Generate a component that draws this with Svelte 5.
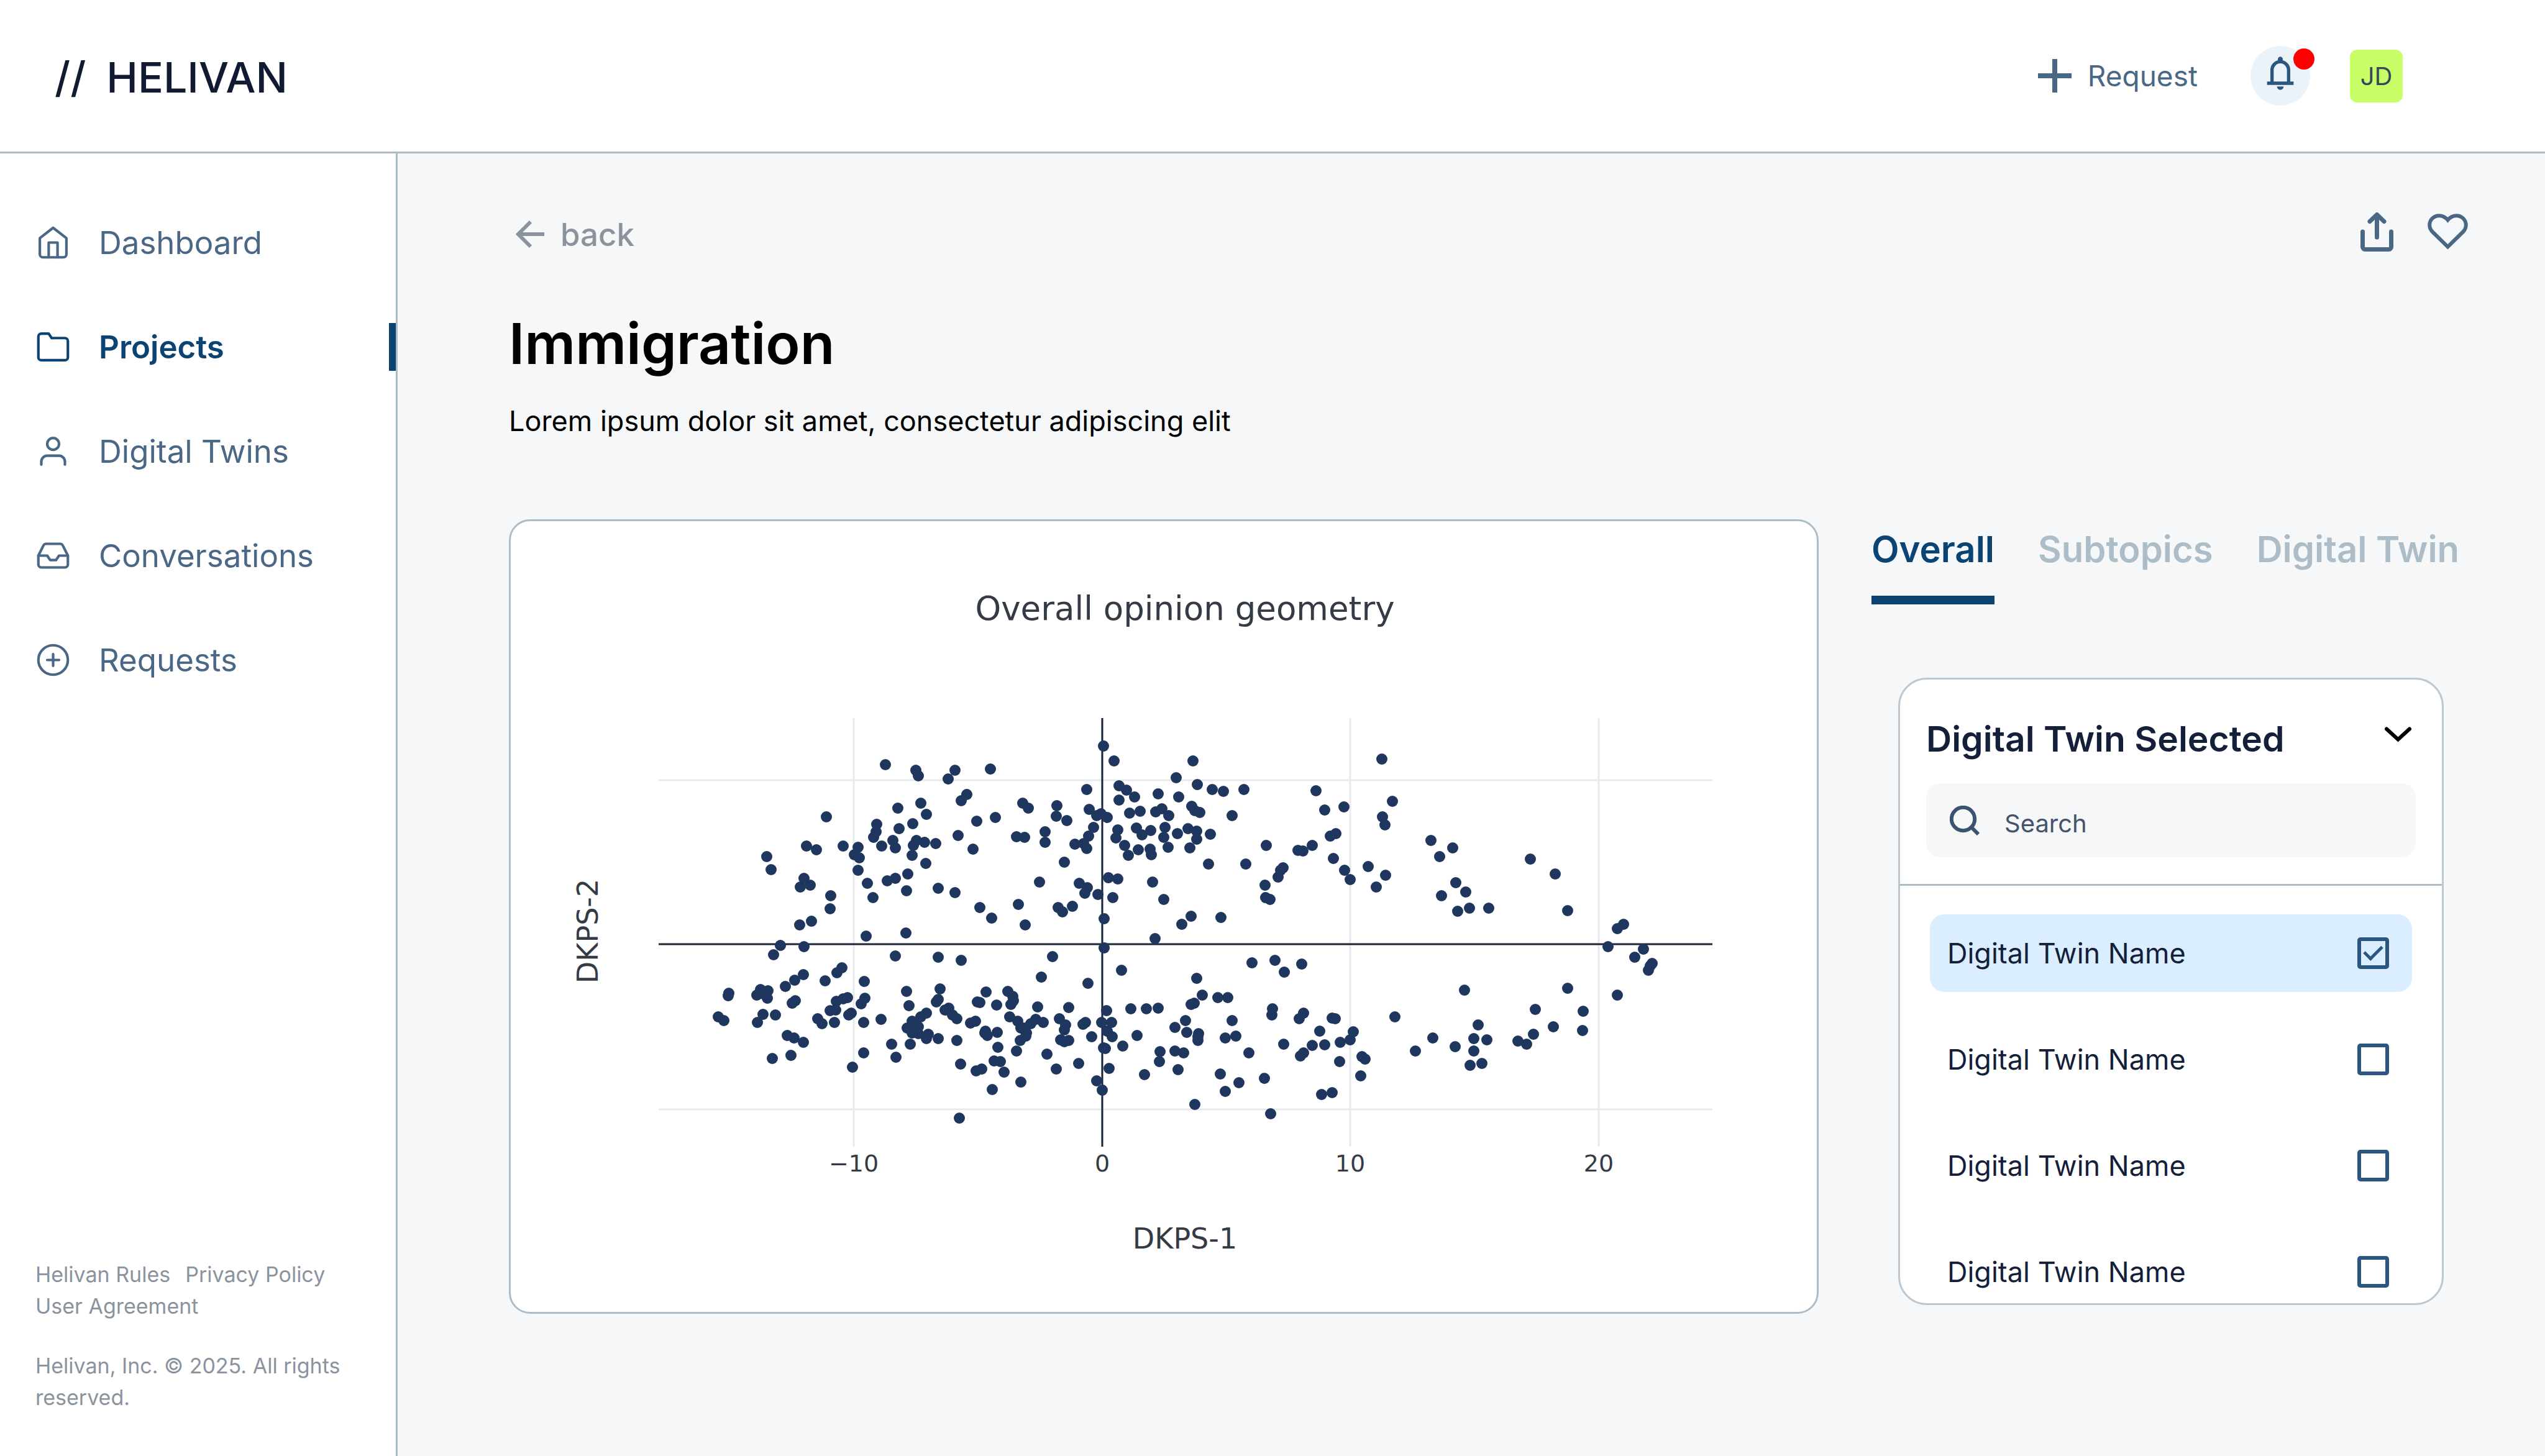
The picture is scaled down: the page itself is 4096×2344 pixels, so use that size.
<script>
    // sidebar links
    let navItems = [
        { id: 'dashboard', title: 'Dashboard' },
        { id: 'projects', title: 'Projects' },
        { id: 'twins', title: 'Digital Twins' },
        { id: 'conversations', title: 'Conversations' },
        { id: 'requests', title: 'Requests' }
    ];
    let activeNav = 'projects';

    let tabs = ['Overall', 'Subtopics', 'Digital Twin'];
    let activeTab = 'Overall';

    let twins = [
        { id: 1, name: 'Digital Twin Name', selected: true },
        { id: 2, name: 'Digital Twin Name', selected: false },
        { id: 3, name: 'Digital Twin Name', selected: false },
        { id: 4, name: 'Digital Twin Name', selected: false }
    ];
    let search = '';

    // gridlines of the scatter plot
    let xTicks = [
        { x: 552, label: '−10' },
        { x: 952, label: '0' },
        { x: 1351, label: '10' },
        { x: 1751, label: '20' }
    ];

    // samples come in four vertical bands, each on its own 1568 grid
    const GRID = 1568;
    const bands = [
        {
            start: 230, width: 441,
            points: [
                [1327,215],[989,408],[1396,377],[1275,437],[1272,464],[1258,484],[876,517],[932,531],
                [1086,517],[1306,517],[1368,497],[1382,523],[1405,452],[1171,522],[1148,548],[1178,560],
                [1170,607],[647,556],[673,603],[859,636],[838,668],[896,661],[1015,700],[1009,748],
                [1222,654],[1254,706],[1336,645],[1383,636],[1215,849],[837,807],[904,795],[727,885],
                [685,918],[861,888],[1382,923],[858,991],[807,1012],[754,1036],[981,1015],[1050,986],
                [1078,966],[1206,1018],[430,1061],[426,1069],[610,1047],[589,1067],[653,1051],[651,1080],
                [630,1062],[627,1138],[594,1169],[698,1142],[368,1147],[400,1161],[810,1088],[794,1098],
                [1045,1090],[1085,1081],[1111,1077],[1008,1124],[1041,1122],[1208,1080],[1187,1099],
                [1131,1135],[1118,1140],[940,1155],[965,1174],[1036,1169],[1201,1168],[1300,1157],
                [766,1217],[803,1227],[856,1241],[785,1290],[678,1301],[1362,1249],[1385,1297],
                [1203,1280],[1139,1333]
            ]
        },
        {
            start: 629, width: 441,
            points: [
                [80,236],[97,257],[306,237],[265,268],[508,232],[109,359],[141,399],[63,435],
                [372,327],[342,348],[430,425],[538,410],[84,496],[130,503],[195,507],[68,514],
                [62,552],[137,580],[325,478],[409,529],[34,620],[28,681],[208,672],[306,689],
                [447,744],[514,782],[25,837],[692,357],[724,376],[656,482],[704,485],[668,733],
                [706,807],[791,650],[822,463],[822,503],[889,368],[884,407],[944,422],[932,576],
                [1059,308],[1073,381],[1115,405],[1140,397],[1178,411],[1100,447],[1071,480],[991,510],
                [1043,508],[1061,526],[1018,655],[1063,671],[1050,690],[1122,696],[897,744],[920,760],
                [976,740],[1157,148],[1217,203],[1245,294],[1286,311],[1332,335],[1244,347],[1306,396],
                [1367,389],[1239,457],[1227,487],[1343,450],[1377,475],[1278,514],[1297,552],[1353,530],
                [1184,633],[1238,639],[1208,708],[1159,786],[1160,893],[211,927],[343,940],[864,925],
                [799,1000],[1067,1024],[1257,976],[28,1053],[41,1107],[222,1044],[209,1084],[199,1093],
                [270,1115],[249,1122],[290,1142],[315,1155],[485,1055],[434,1092],[447,1095],[543,1105],
                [608,1053],[636,1071],[639,1088],[624,1101],[780,1111],[957,1113],[142,1135],[110,1148],
                [60,1165],[95,1185],[32,1190],[64,1192],[61,1207],[95,1210],[141,1229],[152,1213],
                [209,1228],[51,1249],[318,1236],[396,1170],[422,1164],[481,1200],[475,1208],[491,1217],
                [549,1205],[550,1260],[619,1148],[665,1163],[683,1190],[700,1190],[738,1172],[768,1156],
                [810,1169],[713,1207],[712,1218],[680,1236],[657,1273],[530,1312],[566,1314],[586,1353],
                [426,1348],[458,1340],[339,1323],[518,1416],[682,1388],[332,1523],[904,1155],[940,1178],
                [933,1195],[911,1232],[932,1240],[957,1236],[832,1285],[887,1341],[1013,1321],[1052,1169],
                [1037,1175],[1087,1221],[1173,1124],[1145,1169],[1202,1169],[1176,1200],[1204,1221],
                [1155,1263],[1166,1264],[1265,1256],[1186,1339],[1116,1384],[1150,1419],[1313,1118],
                [1401,1117],[1346,1217],[1391,1361]
            ]
        },
        {
            start: 1027, width: 441,
            points: [
                [12,459],[7,527],[13,548],[254,203],[157,265],[277,289],[55,324],[171,335],
                [363,308],[427,315],[545,307],[478,405],[247,370],[263,385],[291,393],[40,390],
                [76,378],[115,404],[91,447],[85,485],[111,521],[163,471],[225,452],[272,461],
                [272,491],[236,523],[351,473],[342,583],[553,583],[673,515],[22,650],[87,715],
                [188,805],[243,775],[412,780],[35,858],[665,661],[667,708],[694,715],[740,632],
                [767,598],[752,607],[854,533],[883,536],[934,515],[957,312],[1005,384],[1115,371],
                [1038,480],[1069,471],[1056,563],[1120,605],[1151,641],[1254,592],[1354,624],[1302,667],
                [1333,194],[1394,352],[1337,409],[1351,438],[590,948],[722,939],[776,982],[874,953],
                [275,1005],[305,1068],[243,1102],[259,1098],[395,1076],[453,1077],[55,1115],[478,1162],
                [209,1162],[148,1186],[217,1206],[283,1209],[281,1222],[282,1235],[438,1225],[498,1220],
                [571,1282],[63,1276],[60,1313],[148,1275],[199,1281],[168,1344],[410,1360],[438,1423],
                [517,1391],[662,1376],[262,1472],[697,1507],[706,1118],[704,1140],[859,1154],[887,1133],
                [1048,1153],[1068,1155],[976,1201],[935,1253],[1005,1251],[1094,1242],[1153,1233],
                [1170,1204],[1092,1314],[772,1248],[869,1293],[886,1280],[1220,1294],[1236,1304],
                [1213,1367],[989,1435],[1048,1429],[1409,1149]
            ]
        },
        {
            start: 1425, width: 540,
            points: [
                [162,495],[263,523],[204,555],[278,651],[213,701],[325,687],[288,758],[342,746],
                [432,747],[626,564],[742,621],[800,755],[1064,806],[1035,821],[989,889],[1155,898],
                [1114,927],[1195,951],[1180,975],[1187,960],[1035,1067],[800,1043],[649,1120],
                [874,1128],[318,1049],[872,1199],[735,1184],[643,1213],[570,1238],[610,1249],
                [382,1178],[363,1229],[424,1232],[276,1259],[171,1227],[363,1275],[346,1326],
                [401,1321],[91,1275]
            ]
        }
    ];

    const dots = bands.flatMap(b =>
        b.points.map(([x, y]) => ({
            x: Math.round(b.start + (x * b.width) / GRID),
            y: Math.round(298 + (y * 683) / GRID)
        }))
    );
</script>

<div class="page">
    <header class="topbar">
        <a class="logo" href="#home"><span>//</span><span>HELIVAN</span></a>
        <div class="topbar-right">
            <button class="request">
                <svg width="54" height="54" viewBox="0 0 54 54" aria-hidden="true">
                    <path d="M27 0v54M0 27h54" fill="none" stroke="currentColor" stroke-width="8" />
                </svg>
                Request
            </button>
            <button class="bell" aria-label="Notifications">
                <svg width="64" height="64" viewBox="0 0 24 24" aria-hidden="true">
                    <path fill="currentColor" d="M4 19v-2h2v-7c0-1.38.42-2.61 1.25-3.69S9.17 4.53 10.5 4.2v-.7c0-.42.15-.77.44-1.06S11.58 2 12 2s.77.15 1.06.44.44.64.44 1.06v.7c1.33.33 2.42 1.04 3.25 2.11S18 8.62 18 10v7h2v2zm8 3c-.55 0-1.02-.2-1.41-.59S10 20.55 10 20h4c0 .55-.2 1.02-.59 1.41S12.55 22 12 22m-4-5h8v-7c0-1.1-.39-2.04-1.18-2.82S13.1 6 12 6s-2.04.39-2.82 1.18S8 8.9 8 10z" />
                </svg>
                <span class="badge"></span>
            </button>
            <button class="avatar">JD</button>
        </div>
    </header>

    <div class="body">
        <aside class="sidebar">
            <nav>
                {#each navItems as item}
                    <a
                        href="#{item.id}"
                        class="nav-item"
                        class:active={item.id === activeNav}
                        on:click|preventDefault={() => (activeNav = item.id)}
                    >
                        <svg class="nav-icon" viewBox="0 0 24 24" aria-hidden="true">
                            {#if item.id === 'dashboard'}
                                <path d="M3 9l9-7 9 7v11a2 2 0 0 1-2 2H5a2 2 0 0 1-2-2z" />
                                <path d="M9 22V12h6v10" />
                            {:else if item.id === 'projects'}
                                <path d="M22 19a2 2 0 0 1-2 2H4a2 2 0 0 1-2-2V5a2 2 0 0 1 2-2h5l2 3h9a2 2 0 0 1 2 2z" />
                            {:else if item.id === 'twins'}
                                <path d="M20 21v-2a4 4 0 0 0-4-4H8a4 4 0 0 0-4 4v2" />
                                <circle cx="12" cy="7" r="4" />
                            {:else if item.id === 'conversations'}
                                <path d="M22 12h-6l-2 3h-4l-2-3H2" />
                                <path d="M5.45 5.11L2 12v6a2 2 0 0 0 2 2h16a2 2 0 0 0 2-2v-6l-3.45-6.89A2 2 0 0 0 16.76 4H7.24a2 2 0 0 0-1.79 1.11z" />
                            {:else}
                                <circle cx="12" cy="12" r="10" />
                                <path d="M12 8v8M8 12h8" />
                            {/if}
                        </svg>
                        {item.title}
                    </a>
                {/each}
            </nav>
            <footer>
                <div class="legal">
                    <a href="#rules">Helivan Rules</a>
                    <a href="#privacy">Privacy Policy</a>
                    <a href="#agreement">User Agreement</a>
                </div>
                <p>Helivan, Inc. © 2025. All rights reserved.</p>
            </footer>
        </aside>

        <main>
            <div class="toolbar">
                <a class="back" href="#projects">
                    <svg width="46" height="46" viewBox="0 0 46 46" aria-hidden="true">
                        <path d="M24 3L4 23l20 20M4 23h42" fill="none" stroke="currentColor" stroke-width="6" />
                    </svg>
                    back
                </a>
                <div class="actions">
                    <button aria-label="Share">
                        <svg width="53" height="64" viewBox="0 0 53 64" aria-hidden="true">
                            <path d="M3.5 32v24.5a4 4 0 0 0 4 4h38a4 4 0 0 0 4-4V32M26.5 41V5M15 15.5l11.5-11 11.5 11" />
                        </svg>
                    </button>
                    <button aria-label="Add to favourites">
                        <svg width="65" height="58" viewBox="0 0 65 58" aria-hidden="true">
                            <path class="heart" d="M32.5 10.2C29 6 24 3.2 18.5 3.2 10 3.2 3.2 9.8 3.2 18.3c0 4.4 1.600 8 5 11.200L32.5 53.300l24.300-23.800c3.400-3.200 5-6.800 5-11.200C61.800 9.800 55 3.200 46.500 3.200 41 3.200 36 6 32.500 10.200z" />
                        </svg>
                    </button>
                </div>
            </div>

            <h1>Immigration</h1>
            <p class="lead">Lorem ipsum dolor sit amet, consectetur adipiscing elit</p>

            <div class="columns">
                <section class="chart">
                    <svg viewBox="0 0 2102 1273" role="img" aria-label="Overall opinion geometry">
                        <text class="chart-title" x="1085" y="159">Overall opinion geometry</text>

                        <g class="grid">
                            <path d="M238 417h1696M238 947h1696" />
                            {#each xTicks as tick}
                                <path d="M{tick.x} 317v690" />
                            {/each}
                        </g>
                        <path class="zero" d="M238 681h1696M952 317v690" />

                        <g class="dots">
                            {#each dots as dot}
                                <circle cx={dot.x} cy={dot.y} r="9" />
                            {/each}
                        </g>

                        {#each xTicks as tick}
                            <text class="tick" x={tick.x} y="1047">{tick.label}</text>
                        {/each}
                        <text class="axis" x="1085" y="1171">DKPS-1</text>
                        <text class="axis" transform="translate(140 660) rotate(-90)">DKPS-2</text>
                    </svg>
                </section>

                <section class="side">
                    <div class="tabs" role="tablist">
                        {#each tabs as tab}
                            <button
                                role="tab"
                                class="tab"
                                class:active={tab === activeTab}
                                aria-selected={tab === activeTab}
                                on:click={() => (activeTab = tab)}
                            >{tab}</button>
                        {/each}
                    </div>

                    <div class="panel">
                        <div class="panel-head">
                            <div class="panel-title">
                                <h2>Digital Twin Selected</h2>
                                <button aria-label="Collapse">
                                    <svg width="43" height="25" viewBox="0 0 43 25" aria-hidden="true">
                                        <path d="M3 3.5l18.5 17L40 3.5" fill="none" stroke="currentColor" stroke-width="6" stroke-linecap="round" />
                                    </svg>
                                </button>
                            </div>
                            <label class="search">
                                <svg width="48" height="48" viewBox="0 0 48 48" aria-hidden="true">
                                    <circle cx="21.5" cy="21.5" r="18.7" />
                                    <path d="M35 35l11 11" />
                                </svg>
                                <input type="text" placeholder="Search" aria-label="Search" bind:value={search} />
                            </label>
                        </div>
                        <div class="twins">
                            {#each twins as twin (twin.id)}
                                <label class="twin" class:selected={twin.selected}>
                                    {twin.name}
                                    <input type="checkbox" bind:checked={twin.selected} />
                                </label>
                            {/each}
                        </div>
                    </div>
                </section>
            </div>
        </main>
    </div>
</div>

<style>
    :global(body) {
        margin: 0;
        background: #f5f7f9;
    }

    .page {
        min-height: 100vh;
        display: flex;
        flex-direction: column;
        font-family: Inter, "Liberation Sans", sans-serif;
        font-optical-sizing: none;
        font-size: 45px;
        line-height: 55px;
        color: #000;
    }

    .page *,
    .page *::before {
        box-sizing: border-box;
    }

    a {
        color: inherit;
        text-decoration: none;
    }

    button {
        padding: 0;
        border: 0;
        background: none;
        font: inherit;
        color: inherit;
        cursor: pointer;
    }

    svg {
        display: block;
        flex: none;
    }

    h1, h2, p {
        margin: 0;
    }

    /* top bar */
    .topbar {
        display: flex;
        align-items: center;
        justify-content: space-between;
        height: 247px;
        padding: 0 229px 0 88px;
        background: #fff;
        border-bottom: 3px solid #adbdc8;
    }

    .logo {
        display: flex;
        gap: 33px;
        padding-top: 4px;
        font-size: 68px;
        line-height: 80px;
        font-weight: 500;
        color: #101a30;
    }

    .topbar-right {
        display: flex;
        align-items: center;
    }

    .request {
        display: flex;
        align-items: center;
        gap: 26px;
        margin-right: 85px;
        font-size: 46px;
        color: #4a6785;
    }

    .bell {
        position: relative;
        display: flex;
        justify-content: center;
        width: 96px;
        height: 96px;
        padding-top: 12px;
        margin-right: 64px;
        border-radius: 50%;
        background: #ebf3fa;
        color: #2b567f;
    }

    .badge {
        position: absolute;
        top: 4px;
        right: -7px;
        width: 34px;
        height: 34px;
        border-radius: 50%;
        background: #f00;
    }

    .avatar {
        width: 85px;
        height: 85px;
        border-radius: 12px;
        background: #c9ff66;
        font-size: 40px;
        color: #35485a;
    }

    /* sidebar */
    .body {
        flex: 1;
        display: flex;
    }

    .sidebar {
        display: flex;
        flex-direction: column;
        justify-content: space-between;
        flex: none;
        width: 640px;
        padding: 105px 0 69px;
        background: #fff;
        border-right: 3px solid #adbdc8;
    }

    nav {
        display: flex;
        flex-direction: column;
        gap: 91px;
    }

    .nav-item {
        display: flex;
        align-items: center;
        gap: 45px;
        height: 77px;
        padding-left: 57px;
        border-right: 11px solid transparent;
        font-size: 51px;
        color: #4a6785;
    }

    .nav-item.active {
        border-right-color: #0b4373;
        font-weight: 600;
        color: #0b4373;
    }

    .nav-icon {
        width: 57px;
        height: 57px;
        fill: none;
        stroke: currentColor;
        stroke-width: 1.75;
        stroke-linecap: round;
        stroke-linejoin: round;
    }

    footer {
        padding: 0 57px;
        font-size: 34px;
        line-height: 51px;
        color: #8a939e;
    }

    .legal {
        display: flex;
        flex-wrap: wrap;
        column-gap: 24px;
        margin-bottom: 45px;
    }

    /* content */
    main {
        flex: 1;
        padding: 94px 124px 0 179px;
    }

    .toolbar {
        display: flex;
        align-items: center;
        justify-content: space-between;
    }

    .back {
        display: flex;
        align-items: center;
        gap: 26px;
        padding: 8px 0 0 11px;
        font-size: 51px;
        font-weight: 500;
        color: #8a939e;
    }

    .actions {
        display: flex;
        align-items: center;
        gap: 55px;
        color: #4a6785;
    }

    .actions path {
        fill: none;
        stroke: currentColor;
        stroke-width: 7;
        stroke-linecap: round;
        stroke-linejoin: round;
    }

    .actions .heart {
        stroke-width: 6;
        stroke-linejoin: miter;
    }

    h1 {
        margin-top: 93px;
        font-size: 91px;
        line-height: 110px;
        font-weight: 600;
    }

    .lead {
        margin-top: 42px;
    }

    .columns {
        display: grid;
        grid-template-columns: minmax(0, 1fr) 960px;
        column-gap: 85px;
        align-items: start;
        margin-top: 131px;
    }

    .chart {
        border: 3px solid #adbdc8;
        border-radius: 34px;
        background: #fff;
    }

    .chart svg {
        width: 100%;
        height: auto;
        font-family: "DejaVu Sans", sans-serif;
        fill: #343b44;
    }

    .chart text {
        text-anchor: middle;
    }

    .chart-title {
        font-size: 53px;
    }

    .axis {
        font-size: 46px;
    }

    .tick {
        font-size: 38px;
    }

    .grid path {
        stroke: #e7eaed;
        stroke-width: 3;
    }

    .zero {
        stroke: #1c2636;
        stroke-width: 3;
    }

    .dots {
        fill: #1f375f;
    }

    /* right column */
    .tabs {
        display: flex;
        gap: 70px;
        padding-top: 14px;
    }

    .tab {
        padding-bottom: 40px;
        border-bottom: 14px solid transparent;
        font-size: 58px;
        line-height: 69px;
        font-weight: 600;
        white-space: nowrap;
        color: #adbdc8;
    }

    .tab.active {
        border-bottom-color: #0b4373;
        color: #0b4373;
    }

    .panel {
        height: 1010px;
        margin: 118px 39px 0 43px;
        overflow: hidden;
        border: 3px solid #bcc7d0;
        border-radius: 46px;
        background: #fff;
        color: #14203a;
    }

    .panel-head {
        padding: 61px 42px 43px;
        border-bottom: 3px solid #adbdc8;
    }

    .panel-title {
        display: flex;
        justify-content: space-between;
        margin-bottom: 37px;
    }

    .panel-title button {
        align-self: flex-start;
        padding: 15px 7px 0;
        color: #000;
    }

    h2 {
        font-size: 57px;
        line-height: 69px;
        font-weight: 600;
    }

    .search {
        display: flex;
        align-items: center;
        gap: 40px;
        height: 119px;
        padding: 0 38px;
        border-radius: 23px;
        background: #f5f7f9;
        color: #3b5270;
    }

    .search svg {
        fill: none;
        stroke: currentColor;
        stroke-width: 6;
    }

    .search input {
        flex: 1;
        min-width: 0;
        padding: 10px 0 0;
        border: 0;
        outline: 0;
        background: none;
        font: inherit;
        font-size: 40px;
        color: inherit;
    }

    .search input::placeholder {
        color: #45546a;
        opacity: 1;
    }

    .twins {
        display: flex;
        flex-direction: column;
        gap: 46px;
        padding: 46px 48px;
    }

    .twin {
        display: flex;
        align-items: center;
        justify-content: space-between;
        flex: none;
        height: 125px;
        padding: 0 37px 0 28px;
        border-radius: 23px;
    }

    .twin.selected {
        background: #daeeff;
    }

    .twin input {
        appearance: none;
        display: grid;
        place-items: center;
        width: 51px;
        height: 51px;
        margin: 0;
        border: 6px solid #2b567f;
        border-radius: 5px;
    }

    /* tick mark */
    .twin input:checked::before {
        content: "";
        width: 29px;
        height: 17px;
        margin-bottom: 8px;
        border-left: 5px solid #2b567f;
        border-bottom: 5px solid #2b567f;
        transform: rotate(-45deg);
    }
</style>
